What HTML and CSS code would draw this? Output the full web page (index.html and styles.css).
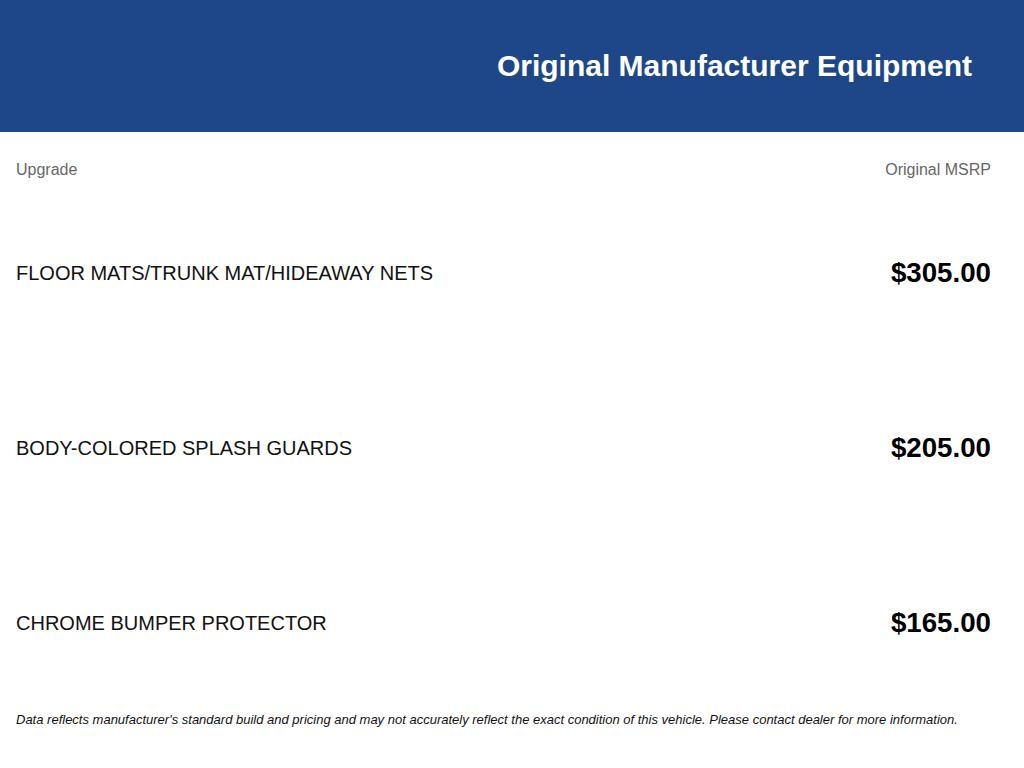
FILE: index.html
```html
<!DOCTYPE html>
<html lang="en">
<head>
<meta charset="utf-8">
<title>Original Manufacturer Equipment</title>
<link rel="stylesheet" href="styles.css">
</head>
<body>
<header class="banner">
  <h1 class="banner-title">Original Manufacturer Equipment</h1>
</header>
<main class="content">
  <div class="table-head">
    <span>Upgrade</span>
    <span>Original MSRP</span>
  </div>
  <div class="rows">
    <div class="row">
      <span class="item">FLOOR MATS/TRUNK MAT/HIDEAWAY NETS</span>
      <span class="price">$305.00</span>
    </div>
    <div class="row">
      <span class="item">BODY-COLORED SPLASH GUARDS</span>
      <span class="price">$205.00</span>
    </div>
    <div class="row">
      <span class="item">CHROME BUMPER PROTECTOR</span>
      <span class="price">$165.00</span>
    </div>
  </div>
  <p class="note">Data reflects manufacturer's standard build and pricing and may not accurately reflect the exact condition of this vehicle. Please contact dealer for more information.</p>
</main>
</body>
</html>
```

FILE: styles.css
```css
* { box-sizing: border-box; }
html, body { margin: 0; padding: 0; background: #fff; }
body { font-family: "Liberation Sans", Arial, sans-serif; color: #111; }

.banner {
  height: 132px;
  background: #1e4789;
  display: flex;
  align-items: center;
  justify-content: flex-end;
  padding-right: 52px;
}
.banner-title {
  margin: 0;
  color: #fff;
  font-size: 30px;
  font-weight: bold;
  line-height: 36px;
}

.content { padding: 0 33px 0 16px; }

.table-head {
  margin-top: 28px;
  display: flex;
  justify-content: space-between;
  color: #666;
  font-size: 16px;
  line-height: 20px;
}

.rows {
  margin-top: 78px;
  display: flex;
  flex-direction: column;
  gap: 145px;
}
.row {
  height: 30px;
  display: flex;
  align-items: center;
  justify-content: space-between;
}
.item { font-size: 20px; color: #111; }
.price { font-size: 27.7px; font-weight: bold; color: #000; }

.note {
  margin: 75px 0 0;
  font-size: 13px;
  line-height: 14px;
  font-style: italic;
  color: #111;
}
```
